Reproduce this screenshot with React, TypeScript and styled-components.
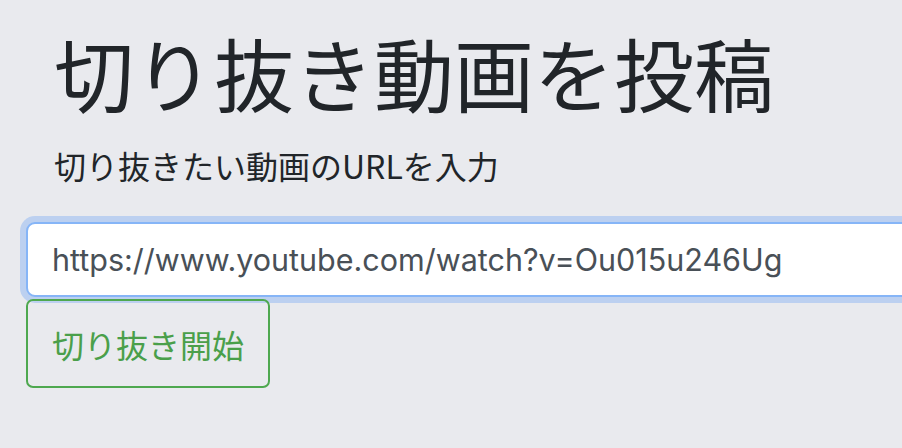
import React, { useEffect, useRef } from "react"
import styled, { createGlobalStyle } from "styled-components"

const GlobalStyle = createGlobalStyle`
  html, body {
    margin: 0;
    padding: 0;
    background: #e9eaee;
    overflow: hidden;
  }

  body {
    font-family: "Noto Sans CJK JP", "Noto Sans", sans-serif;
    color: #212529;
  }
`

const videoUrl = "https://www.youtube.com/watch?v=Ou015u246Ug"

const App: React.FunctionComponent = () => {
  const inputRef = useRef<HTMLInputElement>(null)

  useEffect(() => {
    const el = inputRef.current
    if (!el) return
    el.focus({ preventScroll: true })
    el.setSelectionRange(videoUrl.length, videoUrl.length)
  }, [])

  return (
    <Page>
      <GlobalStyle />
      <Heading>
        <Title>切り抜き動画を投稿</Title>
        <Lead>切り抜きたい動画のURLを入力</Lead>
      </Heading>

      <Form onSubmit={(e) => e.preventDefault()}>
        <UrlInput ref={inputRef} type="text" defaultValue={videoUrl} />
        <SubmitButton type="submit">切り抜き開始</SubmitButton>
      </Form>
    </Page>
  )
}

const Page = styled.main`
  width: 902px;
  height: 448px;
  padding-top: 23px;
  box-sizing: border-box;
  overflow: clip;
`

const Heading = styled.header`
  padding-left: 54px;
`

const Title = styled.h1`
  margin: 0;
  font-size: 80px;
  font-weight: 400;
  line-height: 96px;
`

const Lead = styled.p`
  margin: 22px 0 0;
  font-size: 32px;
  line-height: 48px;
`

const Form = styled.form`
  display: flex;
  flex-direction: column;
  align-items: flex-start;
  margin-top: 33px;
  padding-left: 26px;
`

const UrlInput = styled.input`
  box-sizing: border-box;
  width: 960px;
  height: 75px;
  padding: 0 24px;
  font-family: Inter, "Liberation Sans", sans-serif;
  font-size: 30.5px;
  color: #495057;
  caret-color: #212529;
  background: #fff;
  border: 2px solid #86b5f7;
  border-radius: 9px;
  outline: none;
  box-shadow: 0 0 0 6px #bcd0f0;
`

const SubmitButton = styled.button`
  position: relative;
  box-sizing: border-box;
  margin-top: 2px;
  height: 89px;
  padding: 0 24px;
  font-family: "Noto Sans CJK JP", sans-serif;
  font-size: 32px;
  white-space: nowrap;
  color: #4a9f4a;
  background: transparent;
  border: 2px solid #4ea84f;
  border-radius: 7px;
  cursor: pointer;
`

export default App
